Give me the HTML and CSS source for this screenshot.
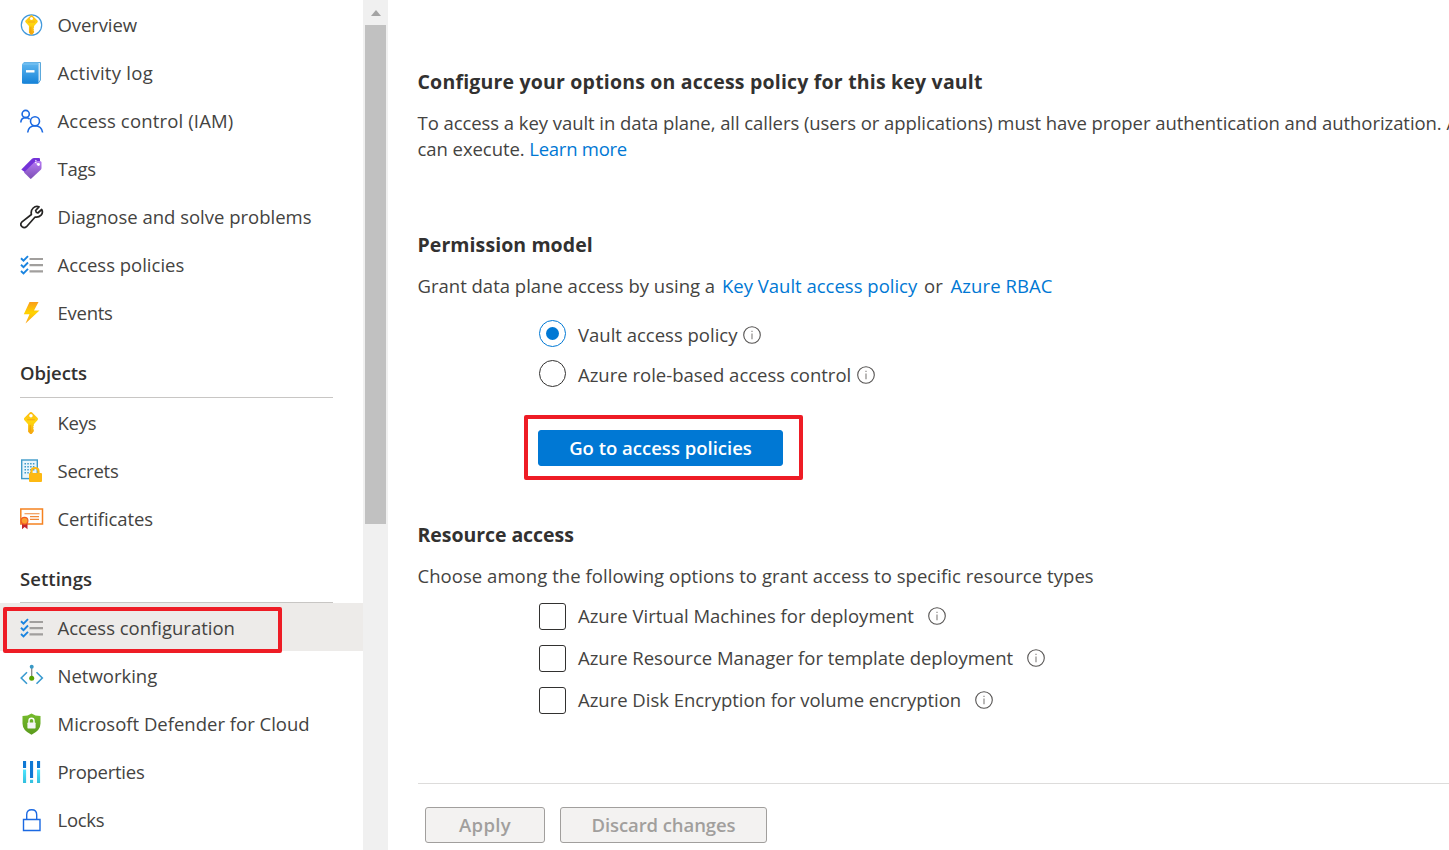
FILE: index.html
```html
<!DOCTYPE html>
<html lang="en">
<head>
<meta charset="utf-8">
<title>Key vault - Access configuration</title>
<link rel="stylesheet" href="styles.css">
</head>
<body>
<svg class="defs" width="0" height="0" aria-hidden="true">
  <defs>
    <linearGradient id="gold" x1="0" y1="0" x2="0" y2="1"><stop offset="0" stop-color="#fdb913"/><stop offset=".45" stop-color="#ffd70f"/><stop offset="1" stop-color="#f5a30f"/></linearGradient>
    <linearGradient id="book" x1="0" y1="0" x2="0" y2="1"><stop offset="0" stop-color="#5cb4ee"/><stop offset="1" stop-color="#1582d8"/></linearGradient>
    <linearGradient id="tag" x1="0" y1="0" x2="0" y2="1"><stop offset="0" stop-color="#b77af4"/><stop offset="1" stop-color="#7d4fb5"/></linearGradient>
    <linearGradient id="bolt" x1="0" y1="0" x2="0" y2="1"><stop offset="0" stop-color="#f99d1c"/><stop offset=".5" stop-color="#ffd400"/><stop offset="1" stop-color="#fba01b"/></linearGradient>
    <linearGradient id="cyan" x1="0" y1="0" x2="0" y2="1"><stop offset="0" stop-color="#50e6ff"/><stop offset="1" stop-color="#32bedd"/></linearGradient>
    <linearGradient id="shield" x1="0" y1="0" x2="0" y2="1"><stop offset="0" stop-color="#76bc2d"/><stop offset="1" stop-color="#5a9a1c"/></linearGradient>
    <symbol id="key" viewBox="0 0 16 24">
      <path fill="url(#gold)" d="M7 .8q1-.9 2 0l6 6q.8 1 0 2l-4 4.400v1.600l-.8 1 .8 1-.8 1.200.8 1v1.600l-2 2.400q-1 1-2 0l-2-2V13.200L1 8.800q-.8-1 0-2z"/>
      <circle cx="8" cy="4.300" r="1.800" fill="#fff"/>
      <path d="M4 8.500h8" stroke="#f3a71b" stroke-width="1.200"/>
      <path d="M7.200 14v7" stroke="#e8930c" stroke-width=".8"/>
    </symbol>
    <symbol id="checks" viewBox="0 0 24 24">
      <g fill="none" stroke="#1a84e0" stroke-width="1.900"><path d="M1 5.300 3.500 7.700 8 3.100M1 11.700l2.500 2.400L8 9.500M1 18l2.500 2.400L8 15.800"/></g>
      <path d="M9.500 6h13.500M9.500 12.200h13.500M9.500 18.300h13.500" stroke="#a19f9d" stroke-width="2.200"/>
    </symbol>
    <symbol id="info" viewBox="0 0 18 18">
      <circle cx="9" cy="9" r="8.300" fill="none" stroke="#555352" stroke-width="1.100"/>
      <path d="M9 7.400v5.800M9 4.800v1.300" stroke="#807e7c" stroke-width="1.100"/>
    </symbol>
  </defs>
</svg>
<div class="page">
  <nav class="sidebar">
    <a class="item"><svg class="icon" viewBox="0 0 24 24"><circle cx="11.500" cy="12" r="10.200" fill="#fff" stroke="#4199dc" stroke-width="1.200"/><use href="#key" x="4.500" y="1.800" width="14" height="20.500"/></svg><span class="snug">Overview</span></a>
    <a class="item"><svg class="icon" viewBox="0 0 24 24"><path d="M4 1.500h16.500v17.500L18.500 22H4z" fill="#cfe7f7" stroke="#5ca9dc"/><rect x="2" y="3" width="16.500" height="19.700" rx="1" fill="url(#book)"/><path d="M2 4q0-2 2-2.500h14.500V4" fill="#6dbcf0"/><path d="M6 10.300h8.500" stroke="#fff" stroke-width="2.400"/></svg><span class="loose">Activity log</span></a>
    <a class="item"><svg class="icon" viewBox="0 0 24 24"><g fill="none" stroke="#1b69e2" stroke-width="1.600"><circle cx="5.700" cy="5" r="3.600"/><path d="M.8 13.500Q1 8.700 5.700 8.600q2.500 0 4 1.700"/><circle cx="15" cy="12.200" r="4.500"/><path d="M7.700 23.500q.7-6.700 7.300-6.800 6.700.1 7.600 6.800"/></g></svg><span class="open">Access control (IAM)</span></a>
    <a class="item"><svg class="icon" viewBox="0 0 24 24"><path d="M1.300 12.500 12 1.800Q13 1 14 1h5q1 0 1 1v3L6 16z" fill="#7432d8"/><path d="M4 15.500 14.500 5Q15.500 4 17 4h3q1.500 0 1.500 1.500V11q0 1-.7 1.800L11.400 21.600q-.7.6-1.300 0z" fill="url(#tag)"/><circle cx="18.500" cy="7.500" r="1.400" fill="#fff"/><path d="M18 7.500Q14.500 5.500 16.200 3.200" fill="none" stroke="#fff" stroke-width="1.200" stroke-dasharray="1.400 .8"/></svg><span class="tight">Tags</span></a>
    <a class="item"><svg class="icon" viewBox="0 0 24 24"><path d="M1.700 17.200 11.400 9.500Q10.500 5.500 13.200 3q2.600-2.400 5.800-1.200L15.600 5.500q.2 2 2.200 2.500L21.700 4.500q1.700 3-.6 5.700-2.500 2.500-6 1.800L6.500 21.700q-2.200 2-4.500 0-2.300-2.300-.3-4.500z" fill="none" stroke="#252423" stroke-width="1.700" stroke-linejoin="round"/></svg><span>Diagnose and solve problems</span></a>
    <a class="item"><svg class="icon"><use href="#checks"/></svg><span>Access policies</span></a>
    <a class="item"><svg class="icon" viewBox="0 0 24 24"><path d="M9.500 1h9L14 9.500h5.500L5.500 22.500l4-9.300H3.800z" fill="url(#bolt)"/></svg><span class="tight">Events</span></a>
    <h3 class="group">Objects</h3>
    <a class="item"><svg class="icon" viewBox="0 0 24 24"><use href="#key" x="3.200" y=".6" width="15.500" height="23"/></svg><span class="tight">Keys</span></a>
    <a class="item"><svg class="icon" viewBox="0 0 24 24"><rect x="1.700" y="1" width="15.600" height="18.600" fill="#e9f6fc" stroke="#3f9bc9" stroke-width="1.400"/><path d="M4.500 4.700h10M4.500 7.700h10M4.500 10.700h10M4.500 13.700h7" stroke="#3f9bc9" stroke-width="1.400" stroke-dasharray="1.500 1.300"/><path d="M11.500 15v-2.700q0-3.300 3.500-3.300t3.500 3.300V15" fill="none" stroke="#fdb913" stroke-width="2.200"/><rect x="9" y="14" width="13" height="9" rx="1" fill="#fdb913"/></svg><span class="tight">Secrets</span></a>
    <a class="item"><svg class="icon" viewBox="0 0 24 24"><rect x=".8" y="2" width="21.700" height="15" fill="#fff" stroke="#f58220" stroke-width="1.500"/><path d="M4.500 6.800h15M10 9.600h9M10 12.400h9" stroke="#f0883a" stroke-width="1.100"/><path d="M2 15h5.500v7.200L4.700 20 2 22.200z" fill="#c4262e"/><circle cx="4.500" cy="13.800" r="3.400" fill="#fba02f" stroke="#ef5b25" stroke-width="1.200"/></svg><span class="snug">Certificates</span></a>
    <h3 class="group settings">Settings</h3>
    <a class="item selected"><svg class="icon"><use href="#checks"/></svg><span>Access configuration</span><i class="callout"></i></a>
    <a class="item"><svg class="icon" viewBox="0 0 24 24"><path d="M7 8.300 1.200 14 7 19.800M16.500 8.300l5.800 5.700-5.800 5.800" fill="none" stroke="#3a9bd0" stroke-width="1.600"/><path d="M11.700 3v10" stroke="#8a8886" stroke-width="1.300"/><circle cx="11.700" cy="2.700" r="2" fill="#3999c6"/><circle cx="11.700" cy="14.200" r="2.500" fill="#57a300"/></svg><span>Networking</span></a>
    <a class="item"><svg class="icon" viewBox="0 0 24 24"><path d="M11.500 1.500q3.500 2.500 9 2.600v7.500q0 7-9 11.200-9-4.200-9-11.200V4.100q5.500-.1 9-2.600z" fill="url(#shield)"/><path d="M9 11V8.800q0-2.600 2.500-2.600T14 8.800V11" fill="none" stroke="#fff" stroke-width="1.400"/><rect x="7.400" y="10.500" width="8.200" height="6" rx=".7" fill="#f4f4f4"/></svg><span>Microsoft Defender for Cloud</span></a>
    <a class="item"><svg class="icon" viewBox="0 0 24 24"><path d="M3 1h3.100v7H3zM10 1h3.100v17H10zM17 1h3.100v7H17z" fill="#0f78d4"/><path d="M3 9.500h3.100V23H3zM10 19.700h3.100V23H10zM17 9.500h3.100V23H17z" fill="url(#cyan)"/></svg><span class="tight">Properties</span></a>
    <a class="item"><svg class="icon" viewBox="0 0 24 24"><path d="M3.500 11.500h16.500v11H3.500zM6.700 11.500V6.700q0-5 5-5t5 5v4.800" fill="none" stroke="#1b69e2" stroke-width="1.400"/></svg><span class="tight">Locks</span></a>
  </nav>
  <div class="scrollbar"><span class="arrow"></span><span class="thumb"></span></div>
  <main class="content">
    <section class="intro">
      <h2>Configure your options on access policy for this key vault</h2>
      <p class="desc">To access a key vault in data plane, all callers (users or applications) must have proper authentication and authorization. A<br>can execute. <a class="link tight">Learn more</a></p>
    </section>
    <section class="permission">
      <h2 class="mid">Permission model</h2>
      <p>Grant data plane access by using a <a class="link first">Key Vault access policy</a> <span class="or">or</span> <a class="link rbac">Azure RBAC</a></p>
      <div class="radios">
        <label class="radio"><span class="circle on"></span><span>Vault access policy</span><svg class="info"><use href="#info"/></svg></label>
        <label class="radio"><span class="circle"></span><span>Azure role-based access control</span><svg class="info"><use href="#info"/></svg></label>
      </div>
      <div class="action"><button class="primary">Go to access policies</button><i class="callout"></i></div>
    </section>
    <section class="resources">
      <h2 class="last">Resource access</h2>
      <p class="choose">Choose among the following options to grant access to specific resource types</p>
      <div class="checkboxes">
        <label class="check"><span class="box"></span><span>Azure Virtual Machines for deployment</span><svg class="info"><use href="#info"/></svg></label>
        <label class="check"><span class="box"></span><span class="fine">Azure Resource Manager for template deployment</span><svg class="info"><use href="#info"/></svg></label>
        <label class="check"><span class="box"></span><span class="fine">Azure Disk Encryption for volume encryption</span><svg class="info"><use href="#info"/></svg></label>
      </div>
    </section>
    <footer class="footer"><button class="apply">Apply</button><button class="discard">Discard changes</button></footer>
  </main>
</div>
</body>
</html>
```

FILE: styles.css
```css
* { box-sizing: border-box; }
body { margin: 0; background: #fff; color: #444341; font: 18.5px/26px "Open Sans", "Noto Sans", sans-serif; overflow: hidden; }
h2, h3, p { margin: 0; }
.defs { position: absolute; }
.page { display: flex; height: 850px; overflow: hidden; }

.sidebar { width: 363px; padding-top: 1px; flex: none; }
.item { position: relative; display: flex; align-items: center; height: 48px; padding-left: 20px; }
.icon { width: 24px; height: 24px; margin-right: 13.5px; flex: none; }
.group { height: 61px; margin: 0 30px 1px 20px; padding-top: 23px; border-bottom: 1px solid #c8c6c4; font-size: 18.5px; font-weight: 600; letter-spacing: -.06px; color: #323130; }
.settings { height: 60px; margin-bottom: 0; letter-spacing: .05px; }
.selected { background: #edebe9; padding-top: 1px; margin-bottom: 1px; }
.callout { position: absolute; border: 4px solid #ee1c25; border-radius: 2px; }
.selected .callout { left: 3px; top: 4px; width: 279px; height: 46px; z-index: 1; }

.tight { letter-spacing: -.26px; }
.snug { letter-spacing: -.1px; }
.fine { letter-spacing: -.02px; }
.open { letter-spacing: .16px; }
.loose { letter-spacing: .27px; }

.scrollbar { width: 25px; padding: 10px 2px 0; background: #f0f0f0; flex: none; display: flex; flex-direction: column; align-items: center; }
.arrow { border: 5.500px solid transparent; border-top: 0; border-bottom: 6px solid #a3a3a3; margin-bottom: 9px; }
.thumb { width: 21px; height: 499px; background: #c1c1c1; }

.content { flex: 1; min-width: 0; padding: 68px 0 0 29.5px; }
h2 { font-size: 19.5px; line-height: 28px; font-weight: 700; letter-spacing: .19px; color: #323130; }
.mid { letter-spacing: .08px; }
.last { letter-spacing: -.06px; }
p { white-space: nowrap; }
.intro { height: 163px; }
.desc { margin-top: 14px; letter-spacing: -.06px; }
.link { color: #0078d4; }
.first { margin-left: 2px; }
.or { margin: 0 3px 0 2px; }
.rbac { letter-spacing: .08px; }
.permission { height: 290px; }
.permission p { margin-top: 14px; }
.radios { margin: 15px 0 0 121.500px; }
.radio { display: flex; align-items: center; height: 40px; padding-top: 1px; }
.circle { width: 27px; height: 27px; margin: -2px 12px 0 0; border: 1px solid #323130; border-radius: 50%; display: flex; align-items: center; justify-content: center; }
.on { border-color: #0078d4; }
.on::after { content: ""; width: 13px; height: 13px; border-radius: 50%; background: #0078d4; }
.info { width: 18px; height: 18px; margin-left: 6px; }
.action { position: relative; width: 245px; margin: 36px 0 0 120.500px; }
.action .callout { left: -14px; top: -15px; width: 279px; height: 65px; }
button { height: 36px; padding: 0; border: 1px solid #a19f9d; border-radius: 3px; background: #f3f2f1; color: #a19f9d; font: 600 18.5px/26px "Open Sans", "Noto Sans", sans-serif; }
.primary { display: block; width: 245px; background: #0078d4; border-color: #0078d4; color: #fff; }
.choose { margin-top: 14px; letter-spacing: .05px; }
.checkboxes { margin: 6px 0 0 121.500px; }
.check { display: flex; align-items: center; height: 42px; }
.check .info { margin: -1px 0 0 14px; }
.box { width: 27px; height: 27px; margin-right: 12px; border: 1px solid #323130; border-radius: 3px; }
.footer { margin: 62px 0 0 .5px; padding: 23px 0 0 7px; border-top: 1px solid #dddcdb; display: flex; gap: 15px; }
.apply { width: 120px; letter-spacing: .34px; }
.discard { width: 207px; letter-spacing: -.09px; }
```
